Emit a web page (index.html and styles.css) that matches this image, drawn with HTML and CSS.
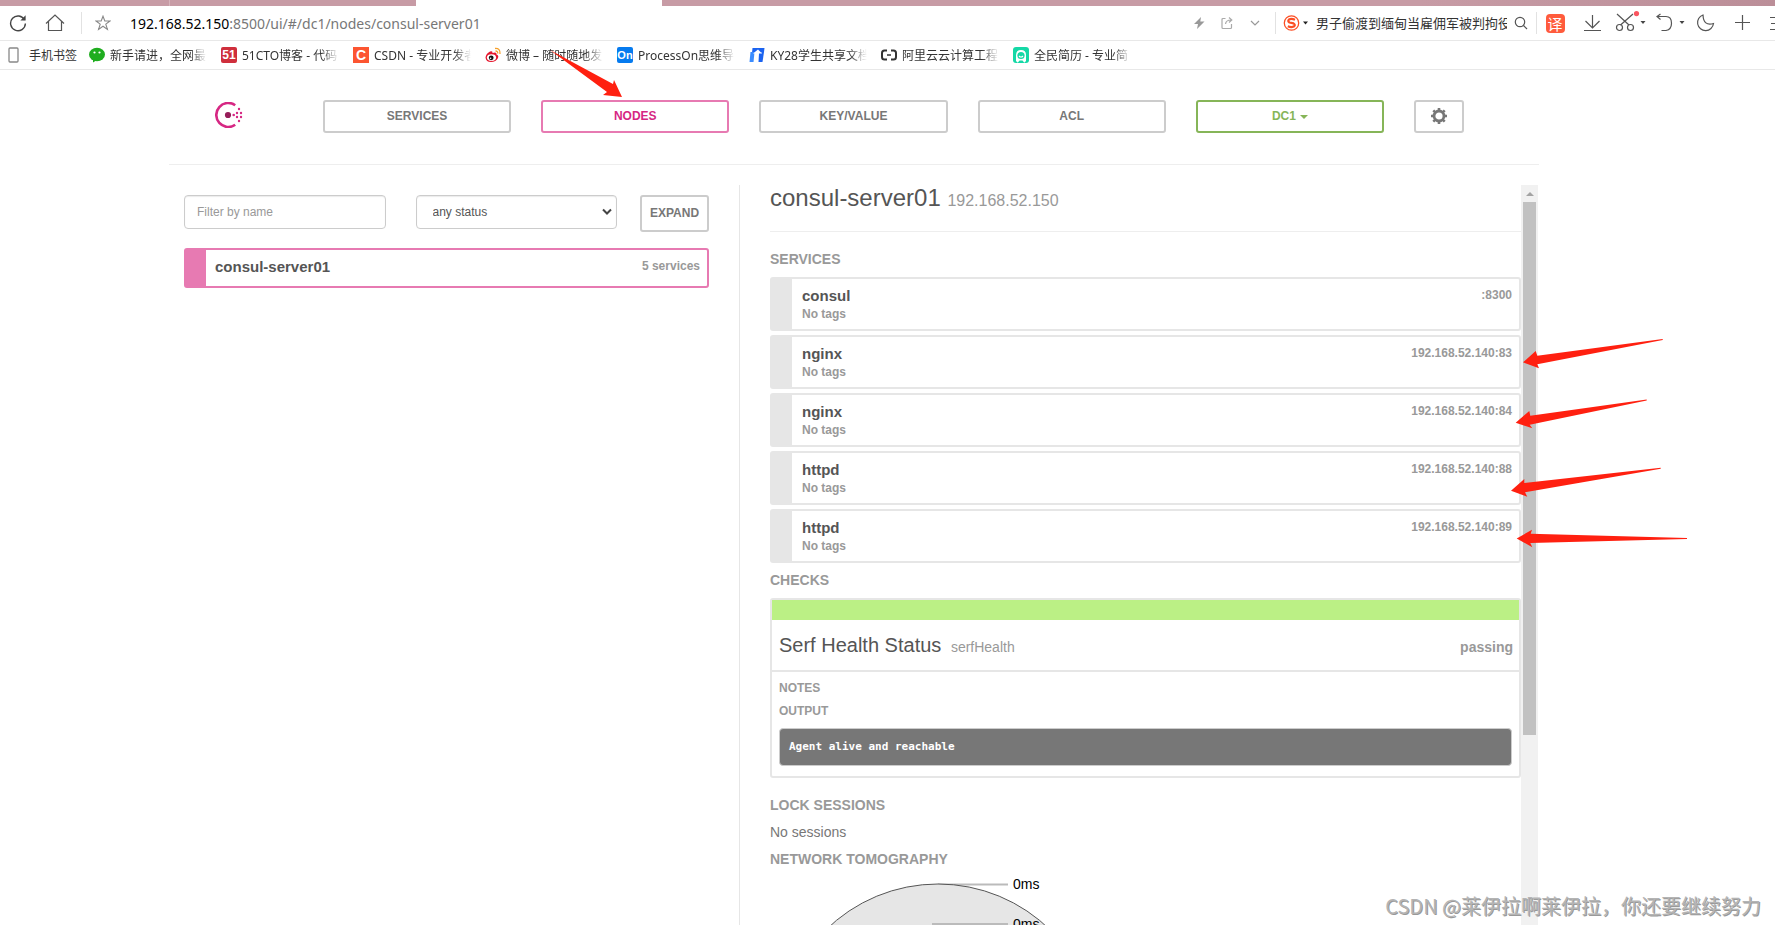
FILE: index.html
```html
<!DOCTYPE html>
<html lang="zh-CN">
<head>
<meta charset="utf-8">
<title>Consul by HashiCorp</title>
<link rel="stylesheet" href="styles.css">
</head>
<body>
<div class="tabs"><div class="tab tab-first"></div><div class="tab tab-second"></div><div class="tab tab-active"></div></div>

<div class="toolbar">
  <div class="tool-group">
    <button class="tool" aria-label="刷新"><svg width="18" height="18" viewBox="0 0 18 18"><path d="M15.6 6A7.4 7.4 0 1 0 16.4 9.6" fill="none" stroke="#444" stroke-width="1.4"/><path d="M16.6 1.2V6.4H11.4Z" fill="#444"/></svg></button>
    <button class="tool" aria-label="主页"><svg width="20" height="18" viewBox="0 0 20 18"><path d="M1 9.5L10 1L19 9.5M3.5 7.5V16.5H16.5V7.5" fill="none" stroke="#555" stroke-width="1.2"/></svg></button>
  </div>
  <div class="address">
    <svg width="16" height="16" viewBox="0 0 16 16"><path d="M8 1.2L9.8 6H15L10.8 9.1L12.4 14.4L8 11.2L3.6 14.4L5.2 9.1L1 6H6.2Z" fill="none" stroke="#888" stroke-width="1.1"/></svg>
    <div class="url"><span class="url-host">192.168.52.150</span>:8500/ui/#/dc1/nodes/consul-server01</div>
  </div>
  <div class="page-actions">
    <svg width="12" height="14" viewBox="0 0 12 14"><path d="M8 1L1 8H5L4 13L11.5 5.5H7.3Z" fill="#999"/></svg>
    <svg width="12" height="14" viewBox="0 0 12 14"><path d="M4.5 2.5H2Q1 2.5 1 3.5V11.5Q1 12.5 2 12.5H9.5Q10.5 12.5 10.5 11.5V8M4.5 8Q5 4 10 4M8 1.5L10.8 4L8 6.5" fill="none" stroke="#aaa" stroke-width="1.2"/></svg>
    <svg width="12" height="14" viewBox="0 0 12 14"><path d="M2 5L6 9L10 5" fill="none" stroke="#999" stroke-width="1.2"/></svg>
  </div>
  <div class="search">
    <svg width="26" height="18" viewBox="0 0 26 18"><circle cx="8.500" cy="9" r="7.200" fill="none" stroke="#fb4e24" stroke-width="1.300"/><path d="M12 5.800Q8.500 4.200 6 5.400Q4.300 7.200 6.500 8.500L10.500 9.400Q13 11 10.800 12.600Q8 13.800 4.800 12.200" fill="none" stroke="#fb4e24" stroke-width="2.200"/><path d="M20 7.500H25L22.500 10.500Z" fill="#222"/></svg>
    <input class="search-box" aria-label="搜索" value="男子偷渡到缅甸当雇佣军被判拘役">
    <svg width="14" height="14" viewBox="0 0 14 14"><circle cx="6" cy="6" r="4.700" fill="none" stroke="#555" stroke-width="1.200"/><path d="M9.500 9.500L13 13" stroke="#555" stroke-width="1.200"/></svg>
  </div>
  <div class="tool-set">
    <button class="tool tool-translate" aria-label="翻译"><span class="translate">译</span></button>
    <button class="tool" aria-label="下载"><svg width="36" height="24" viewBox="0 0 36 24"><path d="M17.500 4V16.500M10.500 10L17.500 17L24.500 10M9 19.500H26" fill="none" stroke="#555" stroke-width="1.200"/></svg></button>
    <button class="tool" aria-label="截图"><svg width="40" height="24" viewBox="0 0 40 24"><path d="M6 3L18 14M22 3L9.500 14" fill="none" stroke="#555" stroke-width="1.200"/><circle cx="8.500" cy="16.500" r="3" fill="none" stroke="#555" stroke-width="1.200"/><circle cx="19.500" cy="16.500" r="3" fill="none" stroke="#555" stroke-width="1.200"/><circle cx="25.500" cy="2.600" r="2.600" fill="#fa5560"/><path d="M29.500 10H34.500L32 13Z" fill="#444"/></svg></button>
    <button class="tool" aria-label="恢复"><svg width="38" height="24" viewBox="0 0 38 24"><path d="M6 5.500H15Q20.500 5.500 20.500 12.200Q20.500 18.500 15 19.500H10.500M9.500 3L6 5.500L9.500 8.500" fill="none" stroke="#555" stroke-width="1.200"/><path d="M28.500 10H33.500L31 13Z" fill="#444"/></svg></button>
    <button class="tool" aria-label="夜间模式"><svg width="36" height="24" viewBox="0 0 36 24"><path d="M14 4A8 8 0 1 0 24.500 12.500Q14.500 15.500 14 4Z" fill="none" stroke="#555" stroke-width="1.200"/></svg></button>
    <button class="tool" aria-label="添加"><svg width="36" height="24" viewBox="0 0 36 24"><path d="M17.500 4V19M10 11.500H25" stroke="#555" stroke-width="1.200"/></svg></button>
    <button class="tool" aria-label="菜单"><svg width="14" height="24" viewBox="0 0 14 24"><path d="M9 6.500H14M10 12.500H14M9 18.500H14" stroke="#555" stroke-width="1.200"/></svg></button>
  </div>
</div>

<nav class="bookmarks">
  <a class="bookmark bookmark-phone" href="#"><svg width="12" height="16" viewBox="0 0 12 16"><rect x="1" y="1" width="9" height="14" rx="1" fill="none" stroke="#888" stroke-width="1.300"/></svg><span>手机书签</span></a>
  <a class="bookmark" href="#"><svg width="16" height="16" viewBox="0 0 16 16"><ellipse cx="8" cy="7.500" rx="8" ry="6.700" fill="#1fad1f"/><path d="M4 12L4 15.500L8 13Z" fill="#1fad1f"/><circle cx="5.500" cy="5.500" r="1.100" fill="#fff"/><circle cx="10.500" cy="5.500" r="1.100" fill="#fff"/></svg><span class="label">新手请进，全网最</span></a>
  <a class="bookmark" href="#"><b class="favicon favicon-51">51</b><span class="label">51CTO博客 - 代码</span></a>
  <a class="bookmark" href="#"><b class="favicon favicon-csdn">C</b><span class="label">CSDN - 专业开发者</span></a>
  <a class="bookmark" href="#"><svg width="16" height="16" viewBox="0 0 16 16"><path d="M0.500 10.500Q1 6.500 5 4.500Q8 3.500 7.500 6Q12 4.500 11.500 7.500Q14 8.500 13 11Q11 15 6 15Q1 15 0.500 10.500Z" fill="#e6162d"/><ellipse cx="6.500" cy="10.600" rx="4.600" ry="3.400" fill="#fff"/><circle cx="6.200" cy="10.800" r="2.400" fill="#111"/><circle cx="5.600" cy="11.300" r="0.800" fill="#fff"/><path d="M10 1.500Q15.500 1 15 7M10.500 4Q13 4 12.700 6.500" fill="none" stroke="#f6a02c" stroke-width="1.300"/></svg><span class="label">微博 – 随时随地发</span></a>
  <a class="bookmark" href="#"><b class="favicon favicon-on">On</b><span class="label">ProcessOn思维导</span></a>
  <a class="bookmark" href="#"><svg width="16" height="16" viewBox="0 0 16 16"><path d="M3.500 1H15.500L15 5H12V15H8.500V6H3Z" fill="#1b63f0"/><path d="M1.500 5H5.500L4.500 15H0.500Z" fill="#3b8cff"/><path d="M12.500 5H15L13.500 15H10Z" fill="#1b63f0"/><path d="M4 6.500L9 2.500L13 6.500H10L9.500 15H7L7.500 6.500Z" fill="#fff"/></svg><span class="label">KY28学生共享文档</span></a>
  <a class="bookmark" href="#"><svg width="16" height="16" viewBox="0 0 16 16"><path d="M6 3.500H3.500Q1 3.500 1 6V10Q1 12.500 3.500 12.500H6M10 3.500H12.500Q15 3.500 15 6V10Q15 12.500 12.500 12.500H10" fill="none" stroke="#333" stroke-width="2"/><path d="M6 8H10" stroke="#333" stroke-width="1.500"/></svg><span class="label">阿里云云计算工程师</span></a>
  <a class="bookmark" href="#"><svg width="16" height="16" viewBox="0 0 16 16"><rect width="16" height="16" rx="3" fill="#14d8a6"/><path d="M3 14V8Q3 3 8 3T13 8V14L11 16H5Z" fill="#fff"/><circle cx="8" cy="8.500" r="3.600" fill="#14d8a6"/><path d="M4.500 16L6.500 13.500H9.500L11.500 16Z" fill="#14d8a6"/><path d="M6 9Q8 11 10 9" fill="none" stroke="#fff" stroke-width="1.100"/></svg><span class="label">全民简历 - 专业简</span></a>
</nav>

<div class="container">
  <header class="topbar">
    <a class="logo" href="#" aria-label="Consul"><svg width="28" height="26" viewBox="0 0 28 26"><path d="M20.200 3.200A12 12 0 1 0 20.200 22.800" fill="none" stroke="#d62783" stroke-width="2.600"/><circle cx="13" cy="13" r="3.100" fill="#961d59"/><g fill="#d62783"><circle cx="18.700" cy="13" r="1.300"/><circle cx="22" cy="11" r="1.200"/><circle cx="22" cy="15" r="1.200"/><circle cx="26" cy="11" r="1.200"/><circle cx="26" cy="15" r="1.200"/><circle cx="24" cy="7" r="1.200"/><circle cx="24" cy="19" r="1.200"/></g></svg></a>
    <a class="btn" href="#">SERVICES</a>
    <a class="btn btn-active" href="#">NODES</a>
    <a class="btn" href="#">KEY/VALUE</a>
    <a class="btn" href="#">ACL</a>
    <button class="btn btn-dc">DC1 <span class="caret"></span></button>
    <button class="btn" aria-label="Settings"><svg width="16" height="16" viewBox="0 0 16 16"><circle cx="8" cy="8" r="5" fill="none" stroke="#777" stroke-width="2.800"/><path d="M8 0V3M8 13V16M0 8H3M13 8H16M2.300 2.300L4.300 4.300M11.700 11.700L13.700 13.700M2.300 13.700L4.300 11.700M11.700 4.300L13.700 2.300" stroke="#777" stroke-width="2.600"/></svg></button>
  </header>

  <main class="columns">
    <section class="nodes">
      <form class="filters">
        <div class="fields">
          <input class="field" type="text" placeholder="Filter by name" aria-label="Filter by name">
          <div class="select-wrap">
            <select class="field field-select" aria-label="Status"><option>any status</option><option>passing</option><option>failing</option></select>
            <svg class="select-arrow" width="10" height="8" viewBox="0 0 10 8"><path d="M1 1.500L5 5.500L9 1.500" fill="none" stroke="#444" stroke-width="2"/></svg>
          </div>
        </div>
        <button class="btn btn-expand" type="button">EXPAND</button>
      </form>
      <a class="node" href="#"><span class="name">consul-server01</span><span class="meta">5 services</span></a>
    </section>

    <section class="detail">
      <div class="detail-body">
        <h3 class="title">consul-server01 <small>192.168.52.150</small></h3>
        <h5 class="heading">SERVICES</h5>
        <div class="services">
          <a class="service" href="#"><span><span class="name">consul</span><span class="tags">No tags</span></span><span class="meta">:8300</span></a>
          <a class="service" href="#"><span><span class="name">nginx</span><span class="tags">No tags</span></span><span class="meta">192.168.52.140:83</span></a>
          <a class="service" href="#"><span><span class="name">nginx</span><span class="tags">No tags</span></span><span class="meta">192.168.52.140:84</span></a>
          <a class="service" href="#"><span><span class="name">httpd</span><span class="tags">No tags</span></span><span class="meta">192.168.52.140:88</span></a>
          <a class="service" href="#"><span><span class="name">httpd</span><span class="tags">No tags</span></span><span class="meta">192.168.52.140:89</span></a>
        </div>
        <h5 class="heading">CHECKS</h5>
        <article class="check">
          <div class="check-head"><h4 class="check-title">Serf Health Status <small>serfHealth</small></h4><span class="check-state">passing</span></div>
          <div class="check-body">
            <h6 class="subheading">NOTES</h6>
            <h6 class="subheading">OUTPUT</h6>
            <pre class="output">Agent alive and reachable</pre>
          </div>
        </article>
        <h5 class="heading heading-plain">LOCK SESSIONS</h5>
        <p class="text">No sessions</p>
        <h5 class="heading heading-plain">NETWORK TOMOGRAPHY</h5>
        <svg class="tomography" width="336" height="336" viewBox="0 0 336 336"><path d="M168 8.500H238" stroke="#bbb" stroke-width="2"/><circle cx="168" cy="168" r="160" fill="#e6e6e6" stroke="#555" stroke-width="1"/><path d="M162 48H238" stroke="#bbb" stroke-width="2"/><text x="243" y="13">0ms</text><text x="243" y="53">0ms</text></svg>
      </div>
      <div class="scrollbar"><div class="scroll-arrow"></div><div class="scroll-track"><div class="scroll-thumb"></div></div></div>
    </section>
  </main>
</div>

<svg class="arrows" width="1775" height="925" viewBox="0 0 1775 925"><g fill="#ff2010">
  <path d="M550 50L613 84L614 80L622 97L603 95L607 92Z"/>
  <path d="M1523 362.300L1535.700 351L1537.300 355.700L1662.700 339L1662.700 340L1537.300 364.300L1539 368.300Z"/>
  <path d="M1515.700 422.700L1529.300 411L1530.300 415.700L1646.700 399.500L1646.700 400.500L1529.700 424.700L1532.300 428.300Z"/>
  <path d="M1511 490.700L1524.300 479L1524.300 483L1660.700 467.700L1660.700 468.700L1525 492.300L1527.300 496.700Z"/>
  <path d="M1516.700 538.500L1532 529.700L1530.700 533.700L1687 538L1687 539L1530.300 543L1532.300 547.300Z"/>
</g></svg>
<div class="watermark">CSDN @莱伊拉啊莱伊拉，你还要继续努力</div>
</body>
</html>
```
FILE: styles.css
```css
* { box-sizing: border-box; }

body {
  display: flex;
  flex-direction: column;
  height: 100vh;
  margin: 0;
  overflow: hidden;
  background: #fff;
  color: #555;
  font: 14px/20px "Liberation Sans", "Noto Sans CJK SC", sans-serif;
}

a { color: inherit; text-decoration: none; }
button, input, select { margin: 0; font-family: inherit; }
svg { display: block; flex: none; }
h3, h4, h5, h6, p, pre { margin: 0; }

/* browser chrome */
.tabs { display: flex; flex: none; height: 6px; background: linear-gradient(90deg, #c79ba5 80%, #bb8e98); }
.tab-first { width: 170px; border-right: 1px solid #d6b4bb; }
.tab-second { width: 246px; }
.tab-active { width: 246px; background: #fff; }

.toolbar {
  display: flex;
  flex: none;
  align-items: center;
  height: 35px;
  border-bottom: 1px solid #e8e8e8;
}
.tool { display: flex; align-items: center; justify-content: center; padding: 0; border: 0; background: none; }
.tool-group { display: flex; gap: 18px; padding: 0 16px 0 9px; }
.address { display: flex; flex: 1; align-items: center; gap: 19px; height: 22px; padding-left: 13px; border-left: 1px solid #e2e2e2; }
.url { padding-top: 1px; color: #777; font: 14px/20px "Noto Sans", sans-serif; white-space: nowrap; }
.url-host { color: #000; }
.page-actions { display: flex; gap: 16px; padding-right: 14px; }
.search { display: flex; align-items: center; gap: 7px; height: 22px; padding: 0 8px 0 7px; border-left: 1px solid #e2e2e2; border-right: 1px solid #e2e2e2; }
.search-box { width: 191px; padding: 0; border: 0; outline: 0; background: none; color: #333; font: 13px/20px "Noto Sans CJK SC", sans-serif; }
.tool-set { display: flex; padding-left: 4px; }
.tool-translate { width: 34px; padding-right: 6px; }
.translate { width: 19px; height: 19px; border-radius: 4px; background: #ff5b3c; color: #fff; font: 15px/19px "Noto Sans CJK SC", sans-serif; text-align: center; }

.bookmarks {
  display: flex;
  flex: none;
  align-items: center;
  gap: 14px;
  height: 29px;
  padding-left: 8px;
  border-bottom: 1px solid #e8e8e8;
  color: #333;
  font: 12px/20px "Noto Sans", "Noto Sans CJK SC", sans-serif;
  white-space: nowrap;
}
.bookmark { display: flex; align-items: center; gap: 5px; }
.bookmark span { padding-top: 1px; }
.bookmark-phone { gap: 9px; width: 67px; }
.label { width: 97px; overflow: hidden; -webkit-mask-image: linear-gradient(90deg, #000 82%, transparent); mask-image: linear-gradient(90deg, #000 82%, transparent); }
.favicon { width: 16px; height: 16px; border-radius: 2px; color: #fff; text-align: center; font: bold 12px/16px "Liberation Sans", sans-serif; }
.favicon-51 { background: #cf2f3c; }
.favicon-csdn { border-radius: 0; background: #fc5531; font-size: 14px; }
.favicon-on { background: #067bef; font-size: 11px; }

/* page */
.container { display: flex; flex: 1; flex-direction: column; min-height: 0; margin: 0 236px 0 169px; }

.topbar {
  display: grid;
  flex: none;
  grid-template-columns: 124px repeat(5, 1fr) 50px;
  gap: 30px;
  padding: 30px 75px 31px 0;
  border-bottom: 1px solid #eee;
}
.logo { padding: 2px 0 0 46px; }
.btn {
  display: flex;
  align-items: center;
  justify-content: center;
  height: 33px;
  padding: 0 0 2px;
  border: 2px solid #ccc;
  border-radius: 3px;
  background: #fff;
  color: #777;
  font-size: 12px;
  font-weight: bold;
  line-height: 18px;
}
.btn-active { border-color: #e77ab2; color: #d62783; }
.btn-dc { gap: 4px; border-color: #86b558; color: #86b558; }
.caret { margin-top: 2px; border: 4px solid transparent; border-top-color: currentColor; border-bottom: 0; }

.columns { display: grid; flex: 1; grid-template-columns: 57fr 80fr; grid-template-rows: minmax(0, 1fr); min-height: 0; padding-top: 20px; }

.nodes { padding: 10px 30px 0 15px; }
.filters { display: flex; align-items: flex-start; gap: 23px; margin-bottom: 16px; }
.fields { display: grid; flex: 1; grid-template-columns: 1fr 1fr; gap: 30px; }
.field {
  width: 100%;
  min-width: 0;
  height: 34px;
  padding: 0 12px;
  border: 1px solid #ccc;
  border-radius: 4px;
  background: #fff;
  box-shadow: inset 0 1px 1px rgba(0, 0, 0, .08);
  color: #555;
  font-size: 12px;
}
.field::placeholder { color: #999; }
.select-wrap { position: relative; }
.field-select { display: block; padding-left: 16px; appearance: none; }
.select-arrow { position: absolute; top: 13px; right: 5px; pointer-events: none; }
.btn-expand { width: 69px; height: 37px; }

.node, .service {
  display: flex;
  justify-content: space-between;
  border: 2px solid #e6e6e6;
  border-left-width: 22px;
  border-radius: 3px;
}
.node { height: 40px; padding: 7px 7px 0 9px; border-color: #e77ab2; }
.name { display: block; color: #555; font-size: 15px; font-weight: bold; line-height: 20px; }
.meta { color: #999; font-size: 12px; font-weight: bold; line-height: 18px; }
.tags { display: block; color: #999; font-size: 12px; font-weight: bold; line-height: 16px; }

.detail { display: flex; min-width: 0; padding-right: 1px; border-left: 1px solid #e6e6e6; }
.detail-body { flex: 1; min-width: 0; overflow: hidden; padding-left: 30px; }
.title { height: 47px; margin-bottom: 17px; border-bottom: 1px solid #eee; color: #555; font-size: 24px; font-weight: normal; line-height: 26px; }
.title small { color: #999; font-size: 16px; }
.heading { margin-bottom: 8px; color: #999; font-size: 14px; font-weight: bold; line-height: 20px; }
.heading-plain { margin-bottom: 7px; }
.services { display: flex; flex-direction: column; gap: 4px; margin-bottom: 7px; }
.service { height: 54px; padding: 7px 7px 0 10px; }

.check { margin-bottom: 17px; border: 2px solid #e6e6e6; border-radius: 3px; }
.check-head { display: flex; align-items: center; justify-content: space-between; padding: 11px 6px 9px 7px; border-top: 20px solid #bbf085; border-bottom: 2px solid #e6e6e6; }
.check-title { color: #555; font-size: 20px; font-weight: normal; line-height: 28px; }
.check-title small { margin-left: 4px; color: #999; font-size: 14px; }
.check-state { padding-top: 2px; color: #999; font-weight: bold; }
.check-body { padding: 5px 7px 10px; }
.subheading { color: #999; font-size: 12px; font-weight: bold; line-height: 23px; }
.output { height: 38px; margin-top: 5px; padding: 0 9px; border: 1px solid #ccc; border-radius: 4px; background: #777; color: #fff; font: bold 11px/36px "DejaVu Sans Mono", monospace; }
.text { margin-bottom: 7px; color: #777; }
.tomography { overflow: visible; }
.tomography text { fill: #000; font-size: 14px; }

.scrollbar { display: flex; flex: none; flex-direction: column; width: 17px; background: #f1f1f1; }
.scroll-arrow { align-self: center; margin: 7px 0 6px; border: 4px solid transparent; border-top: 0; border-bottom-color: #a3a3a3; }
.scroll-track { flex: 1; padding: 0 2px; }
.scroll-thumb { height: 73.7%; background: #c1c1c1; }

/* annotations over the page */
.arrows { position: absolute; top: 0; left: 0; pointer-events: none; }
.watermark { position: absolute; right: 14px; bottom: 5px; color: #b4b4b4; font: 20px/28px "Noto Sans CJK SC", sans-serif; text-shadow: 1px 1px 0 #999; white-space: nowrap; }
```
